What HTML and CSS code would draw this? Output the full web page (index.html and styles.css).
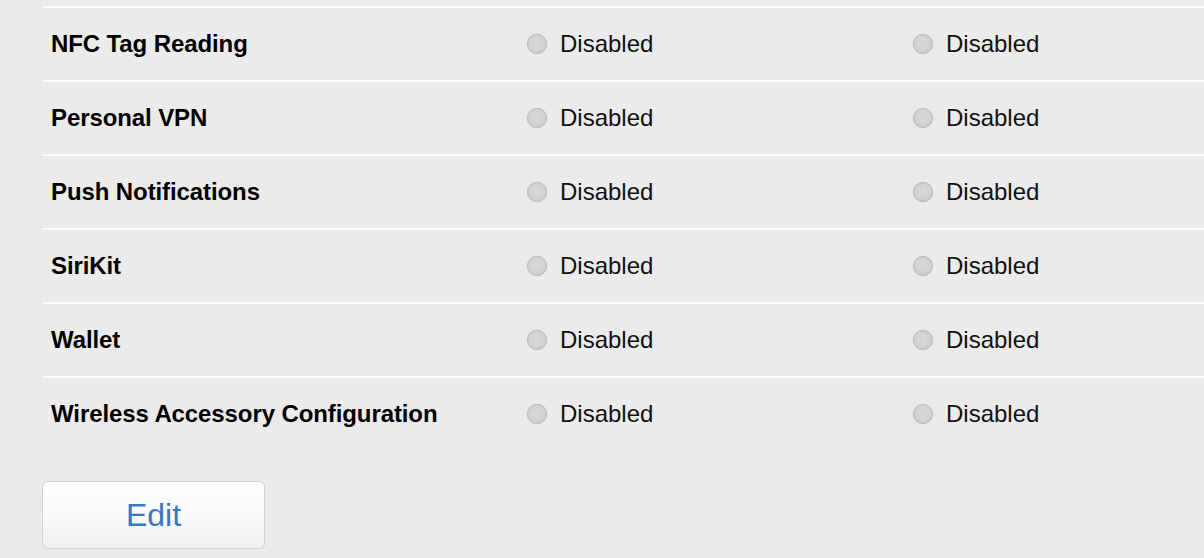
FILE: index.html
```html
<!DOCTYPE html>
<html lang="en">
<head>
<meta charset="utf-8">
<title>Capabilities</title>
<link rel="stylesheet" href="styles.css">
</head>
<body>
<div class="page">
  <div class="table">
    <div class="row">
      <div class="label">NFC Tag Reading</div>
      <div class="status"><span class="radio"></span>Disabled</div>
      <div class="status"><span class="radio"></span>Disabled</div>
    </div>
    <div class="row">
      <div class="label">Personal VPN</div>
      <div class="status"><span class="radio"></span>Disabled</div>
      <div class="status"><span class="radio"></span>Disabled</div>
    </div>
    <div class="row">
      <div class="label">Push Notifications</div>
      <div class="status"><span class="radio"></span>Disabled</div>
      <div class="status"><span class="radio"></span>Disabled</div>
    </div>
    <div class="row">
      <div class="label">SiriKit</div>
      <div class="status"><span class="radio"></span>Disabled</div>
      <div class="status"><span class="radio"></span>Disabled</div>
    </div>
    <div class="row">
      <div class="label">Wallet</div>
      <div class="status"><span class="radio"></span>Disabled</div>
      <div class="status"><span class="radio"></span>Disabled</div>
    </div>
    <div class="row">
      <div class="label">Wireless Accessory Configuration</div>
      <div class="status"><span class="radio"></span>Disabled</div>
      <div class="status"><span class="radio"></span>Disabled</div>
    </div>
  </div>
  <button class="edit-btn" type="button">Edit</button>
</div>
</body>
</html>
```

FILE: styles.css
```css
html, body {
  margin: 0;
  padding: 0;
  background: #ebebeb;
}

body {
  font-family: "Liberation Sans", Arial, Helvetica, sans-serif;
  color: #000;
  overflow: hidden;
}

.page {
  padding: 6px 0 0 42px;
}

.table {
  display: flex;
  flex-direction: column;
}

.row {
  display: grid;
  grid-template-columns: 476px 386px 1fr;
  align-items: center;
  height: 72px;
  padding-left: 9px;
  border-top: 2px solid #f9f9f9;
}

.label {
  font-size: 24px;
  font-weight: bold;
  line-height: 72px;
  letter-spacing: -0.1px;
  white-space: nowrap;
}

.status {
  display: flex;
  align-items: center;
  gap: 13px;
  font-size: 24px;
  line-height: 72px;
  color: #111;
}

.radio {
  display: inline-block;
  width: 18px;
  height: 18px;
  border-radius: 50%;
  border: 1px solid #b9b9b9;
  background: radial-gradient(circle at 50% 45%, #dadada 0%, #d2d2d2 55%, #c4c4c4 100%);
  box-shadow: 0 0 1px rgba(0, 0, 0, 0.2);
  flex: none;
}

.edit-btn {
  display: block;
  margin-top: 31px;
  width: 223px;
  height: 68px;
  border: 1px solid #d2d2d2;
  border-radius: 6px;
  background: linear-gradient(to bottom, #ffffff 0%, #fafafa 50%, #f0f0f0 100%);
  box-shadow: 0 1px 1px rgba(0, 0, 0, 0.04);
  font-family: "Liberation Sans", Arial, Helvetica, sans-serif;
  font-size: 32px;
  color: #3a76c4;
  padding: 0;
  cursor: pointer;
}
```
